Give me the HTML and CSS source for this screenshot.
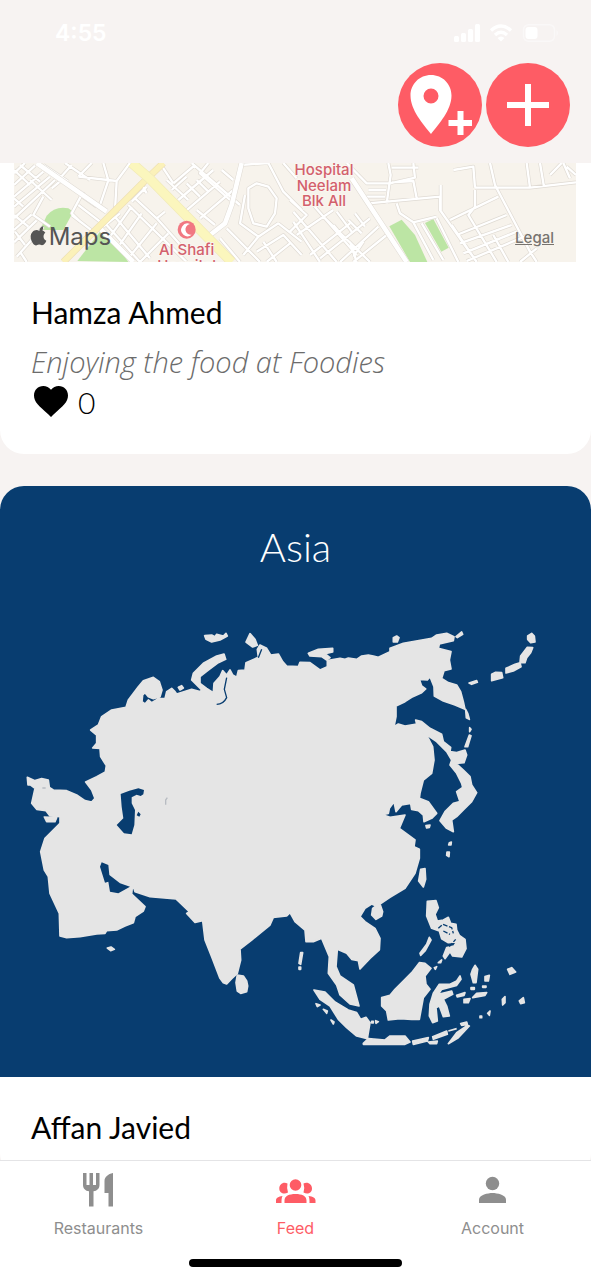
FILE: index.html
```html
<!DOCTYPE html>
<html lang="en">
<head>
<meta charset="utf-8">
<meta name="viewport" content="width=device-width, initial-scale=1">
<title>Feed</title>
<link rel="stylesheet" href="styles.css">
</head>
<body>
<div class="app">
  <header class="top">
    <div class="status">
      <span class="time">4:55</span>
      <svg class="status-icons" width="106" height="18" viewBox="0 0 106 18" fill="#fff" aria-hidden="true">
        <rect x="0" y="12" width="5" height="6" rx="1.5"/><rect x="7" y="9" width="5" height="9" rx="1.5"/><rect x="14" y="5" width="5" height="13" rx="1.5"/><rect x="21" y="0" width="5" height="18" rx="1.5"/>
        <g fill="none" stroke="#fff" stroke-width="3.4"><path d="M37 6.500Q47-2.500 57 6.500"/><path d="M41 11Q47 5.500 53 11"/></g><path d="M43.500 14Q47 11 50.500 14L47 17.500Z"/>
        <rect x="69.500" y=".7" width="31" height="16.600" rx="5" fill="none" stroke="#faf8f8" stroke-width="1.400"/><rect x="71.500" y="3" width="12" height="12" rx="3"/><path d="M102.500 6Q105.500 9 102.500 12Z" fill="#faf8f8"/>
      </svg>
    </div>
    <div class="actions">
      <button class="round" type="button" aria-label="Add place">
        <svg viewBox="0 0 84 84" fill="#fff"><path fill-rule="evenodd" d="M33 12C21.500 12 12.500 21 12.500 32.500C12.500 47 25 61 33 71C41 61 53.500 47 53.500 32.500C53.500 21 44.500 12 33 12ZM33 25.500A7.500 7.500 0 1 1 33 40.500A7.500 7.500 0 0 1 33 25.500Z"/><path d="M59.500 48h6v9H74v6h-8.500v9h-6v-9H50.500v-6h9Z"/></svg>
      </button>
      <button class="round" type="button" aria-label="Add post">
        <svg viewBox="0 0 84 84" fill="#fff"><path d="M39 21h6v18h18v6H45v18h-6V45H21v-6h18Z"/></svg>
      </button>
    </div>
  </header>

  <main class="feed">
    <article class="card">
      <div class="map">
        <svg class="map-art" viewBox="42 24 1686 297" preserveAspectRatio="xMidYMid slice" aria-label="Map">
          <rect x="42" y="24" width="1686" height="297" fill="#f7f3ec"/>
          <g fill="#bce5a4">
            <path d="M120 225L140 182Q165 152 205 160L220 170L190 225Z"/><path d="M232 318L300 230L345 262L385 321Z"/>
            <path d="M1168 214L1205 194L1245 240L1282 321H1230Z"/><path d="M1275 204L1300 192L1346 278L1324 290Z"/>
          </g>
          <defs>
            <path id="streets" d="M42 55L75 24M42 90L105 32M42 125L130 50M42 155L150 65M42 190L165 75M42 225L95 178M42 262L110 196M50 305L130 215M42 45L90 90M60 30L120 80M42 130L70 155M42 180L85 215M45 230L75 270M60 290L80 321M90 75L155 135M130 30L205 80M155 100L185 75M130 125L100 180L150 215M215 30L175 75M235 65L275 24M235 65L350 78M195 24L270 75M310 24L325 76L300 150M350 78L345 165M350 78L390 24M250 110L215 175L240 200M240 120L290 155M235 150L300 200M215 180L280 230M310 215L360 175M330 245L395 155M355 275L425 175M385 310L470 205M385 150L560 321M345 185L450 310M320 210L420 321M440 115L420 80M395 140L440 95M420 321L505 235M405 130L470 190L555 285M470 190L495 170M480 25L520 85M520 85L585 30M515 105L560 65M535 135L640 45M555 170L660 80M600 190L700 105M500 75L565 135M560 85L600 125M590 75L625 110M575 24L720 150M625 24L600 55L690 135M645 210L590 165M665 45L700 75M720 30L805 24M735 120L720 205L775 245L835 205M745 100L770 85L805 95L830 130L825 175L800 215L760 205L745 160ZM805 24L850 110L905 165M850 24L890 70M775 245L730 300M835 205L905 260M770 290L850 240L905 300M800 321L870 265M680 220L780 321M660 250L720 321M790 260L830 321M870 135L920 180L870 230M880 200L960 321M890 240L1000 165M930 300L1050 205M960 310L1110 190M1020 321L1135 215M1060 321L1160 240M880 170L1010 321M940 150L1070 300M975 190L1110 321M1010 170L1055 230M1000 210L1025 240M1065 175L1095 215M1045 195L1085 235M1050 260L1070 321M1060 305L1090 260"/>
            <path id="lanes" d="M1040 24L1100 85H1170L1245 68M1105 105H1158M1100 125H1155M1165 24L1172 60L1160 145M1175 38H1255M1175 82L1240 78L1250 130M1240 24L1245 70M1105 145L1320 125L1320 165L1430 321M1322 90V165M1190 145L1200 175L1240 202L1310 185M1240 202L1300 315M1265 205L1330 315M1310 190L1375 321M1350 195L1495 125M1355 210L1430 321M1370 240L1520 180M1380 265L1535 210M1390 295L1550 230M1400 318L1585 240M1425 105V155L1405 180L1490 321M1480 240L1525 321M1360 45L1420 35L1425 98M1425 98H1590L1728 82M1470 24L1485 90L1590 290L1610 321M1580 24L1590 98M1620 24L1632 96M1650 60L1685 24M1690 24L1710 70M1728 60L1700 35M1560 321L1610 280"/>
          </defs>
          <g fill="none" stroke-linejoin="round">
            <g stroke="#dfdad3" stroke-width="11"><use href="#streets"/><use href="#lanes"/></g>
            <g stroke="#fff" stroke-width="7"><use href="#streets"/><use href="#lanes"/></g>
            <g stroke="#dfdad3" stroke-width="17"><path d="M110 24L320 170M290 210L400 321M725 24L695 150L675 205L630 240M1055 70L1220 321"/></g>
            <g stroke="#fff" stroke-width="14"><path d="M110 24L320 170M290 210L400 321M725 24L695 150L675 205L630 240M1055 70L1220 321"/></g>
            <path d="M490 24L440 72L190 321" stroke="#eee0b5" stroke-width="21"/><path d="M490 24L440 72L190 321" stroke="#fbf1b9" stroke-width="17"/>
            <path d="M395 24L450 72L695 321" stroke="#f1eab8" stroke-width="30"/><path d="M395 24L450 72L695 321" stroke="#fbf6bd" stroke-width="26"/>
          </g>
          <circle cx="560" cy="224" r="27" fill="#f17882"/><path d="M570 207A19 19 0 1 0 575 239A15 15 0 1 1 570 207Z" fill="#fff"/>
          <path d="M126 226Q116 225 118 234Q129 233 130 213Q118 217 118 228C108 220 92 229 92 246C93 260 102 273 110 271C117 267 120 269 126 271C133 270 137 262 139 257C129 253 128 239 136 233Q133 228 126 226Z" fill="#555"/>
          <g class="place">
            <text x="972" y="60">Hospital</text><text x="972" y="107">Neelam</text><text x="972" y="154">Blk All</text>
            <text x="560" y="301">Al Shafi</text><text x="560" y="348">Hospital</text>
          </g>
          <text class="brand" x="146" y="270">Maps</text>
        </svg>
        <a class="legal" href="#legal">Legal</a>
      </div>
      <div class="body">
        <h2 class="name">Hamza Ahmed</h2>
        <p class="caption">Enjoying the food at Foodies</p>
        <button class="like" type="button" aria-label="Like, 0">
          <svg width="34" height="32" viewBox="0 0 34 32" aria-hidden="true"><path d="M17 31L14.500 28.500C5 20 0 16 0 9.500C0 4 4 0 9.300 0C12.300 0 15.200 1.500 17 3.800C18.800 1.500 21.700 0 24.700 0C30 0 34 4 34 9.500C34 16 29 20 19.500 28.500Z"/></svg>
          <span>0</span>
        </button>
      </div>
    </article>

    <article class="card">
      <div class="photo">
        <h3 class="region">Asia</h3>
        <svg class="asia" viewBox="0 390 1773 1383" aria-label="Map of Asia">
          <g fill="#e5e5e5" stroke="#e5e5e5" stroke-width="5" stroke-linejoin="round">
          <path d="M82 874L105 884 125 878 145 882 148 904 160 912 200 914 230 927 255 944 275 948 285 937 275 912 257 888 290 872 316 858 319 839 302 812 300 787 278 786 290 772 290 747 272 732 295 717 305 692 335 672 378 664 385 642 415 602 430 584 460 574 478 587 486 612 480 632 460 638 445 632 435 620 428 627 426 647 435 654 445 642 455 650 475 638 495 638 500 617 515 607 525 617 530 624 575 610 600 617 605 612 590 597 575 582 580 562 610 532 650 510 672 504 677 520 655 530 625 552 600 572 600 592 620 607 640 620 642 592 660 572 668 554 680 567 690 552 698 567 710 574 715 554 735 552 738 530 775 514 772 490 780 477 800 487 812 507 835 504 848 527 860 540 895 542 900 529 930 530 960 552 982 542 982 524 1020 517 1035 520 1045 516 1070 520 1085 510 1105 507 1120 510 1135 514 1170 497 1170 487 1210 472 1295 457 1310 447 1340 442 1362 452 1360 464 1318 474 1315 487 1353 497 1348 522 1353 549 1332 554 1325 577 1345 590 1370 597 1382 617 1390 647 1395 670 1365 657 1330 645 1303 630 1302 602 1290 572 1282 582 1258 580 1265 600 1277 609 1265 620 1235 634 1215 647 1188 660 1188 692 1182 722 1195 714 1215 720 1250 714 1247 702 1265 707 1290 727 1325 745 1330 767 1352 784 1350 797 1370 800 1395 792 1400 807 1392 830 1368 832 1390 852 1410 872 1415 897 1430 920 1415 947 1390 972 1370 992 1355 1002 1360 1037 1340 1027 1320 1004 1335 977 1360 952 1380 947 1370 917 1388 904 1385 892 1370 862 1350 837 1355 822 1340 797 1310 767 1270 740 1285 757 1298 782 1302 822 1295 862 1270 882 1260 922 1258 937 1285 947 1310 982 1295 997 1272 1007 1270 987 1255 974 1235 970 1232 952 1205 957 1188 977 1182 947 1168 967 1165 982 1148 986 1170 994 1215 987 1198 1027 1245 1062 1242 1082 1258 1090 1258 1117 1245 1162 1215 1207 1170 1234 1140 1254 1148 1277 1145 1290 1128 1300 1115 1287 1118 1267 1128 1260 1115 1254 1095 1267 1080 1292 1095 1307 1125 1327 1140 1357 1138 1392 1110 1417 1080 1449 1075 1424 1055 1420 1040 1402 1012 1390 1008 1442 1020 1470 1060 1497 1077 1560 1050 1554 1020 1527 1010 1497 985 1462 988 1412 965 1357 940 1367 918 1367 915 1332 885 1307 870 1280 860 1290 820 1294 810 1317 755 1362 720 1389 722 1422 712 1462 695 1478 680 1494 670 1490 660 1477 635 1412 615 1362 608 1304 585 1309 560 1282 568 1277 528 1239 450 1232 405 1217 398 1194 395 1224 435 1262 430 1275 405 1292 400 1310 375 1320 350 1332 320 1334 315 1342 290 1344 240 1352 200 1355 180 1350 178 1282 150 1222 145 1172 133 1152 122 1097 135 1057 180 1012 180 992 150 990 138 974 110 970 95 952 105 907 92 897 84 897Z"/>
          <path d="M614 449L635 447 645 452 650 445 670 450 678 442 682 450 660 462 635 468 618 460ZM750 443L765 460 772 478 758 483 738 468ZM535 604L545 599 550 606 540 612ZM925 502L955 490 998 487 998 498 975 503 990 515 980 522 965 512 930 510ZM1180 455L1190 450 1197 455 1192 468 1180 468ZM1368 452L1385 438 1388 445 1372 455ZM1583 450L1595 442 1603 450 1605 468 1592 470 1583 460ZM1582 484L1598 485 1592 500 1580 515 1575 530 1560 530 1562 510ZM1518 547L1545 535 1560 530 1563 542 1540 555 1518 561ZM1475 565L1487 559 1505 560 1508 575 1475 584ZM1407 591L1430 584 1432 589 1415 595ZM1397 670L1403 682 1408 700 1399 695ZM1409 725L1413 730 1409 737ZM1408 747L1413 749 1403 782 1395 782ZM133 993L170 995 165 1007 140 1007ZM322 1386L333 1383 343 1390 332 1394ZM712 1467L730 1470 740 1485 743 1500 740 1517 722 1522 712 1515 708 1490ZM1278 1019L1290 1017 1288 1024 1280 1026ZM1348 1070L1354 1068 1353 1077 1346 1077ZM1341 1098L1348 1098 1347 1112 1340 1108ZM1262 1150L1275 1148 1277 1180 1270 1203 1256 1185ZM902 1400L908 1400 902 1435 897 1432ZM897 1443H902V1450H897Z"/>
          <path d="M1282 1246L1308 1244 1315 1265 1305 1285 1312 1305 1330 1302 1345 1294 1352 1312 1368 1315 1370 1332 1378 1348 1395 1360 1398 1388 1385 1413 1358 1410 1350 1397 1335 1418 1330 1410 1340 1385 1362 1380 1370 1368 1345 1370 1325 1358 1318 1335 1295 1327 1280 1290ZM1288 1354L1293 1362 1275 1395 1262 1408 1260 1402 1280 1375ZM1258 1430L1275 1432 1293 1447 1275 1470 1278 1495 1290 1510 1270 1535 1258 1600 1235 1600 1200 1598 1165 1602 1160 1575 1145 1560 1145 1535 1170 1528 1185 1510 1215 1480 1235 1460ZM942 1512L975 1518 1005 1548 1045 1572 1070 1580 1082 1600 1098 1594 1110 1610 1102 1658 1070 1650 1040 1625 1015 1600 990 1560 960 1540ZM1115 1606H1120V1611H1115ZM1127 1604L1135 1607 1128 1612ZM1090 1672L1105 1658 1155 1662 1170 1650 1215 1650 1230 1668 1215 1675H1090ZM1238 1665L1285 1655 1282 1665 1240 1675ZM1285 1668L1312 1665 1310 1673H1290ZM1298 1652L1340 1635 1342 1645 1300 1660ZM1345 1673L1370 1640 1402 1618 1408 1620 1375 1655ZM1345 1635L1370 1628M1382 1613L1400 1608 1402 1615 1385 1618ZM1300 1522L1318 1495 1350 1495 1370 1485 1380 1470 1383 1480 1370 1498 1325 1510 1315 1525 1355 1515 1358 1525 1330 1540 1340 1560 1348 1590 1330 1592 1318 1560 1308 1565 1312 1605 1298 1610 1288 1590 1290 1555ZM1418 1450L1425 1438 1433 1450 1428 1490 1420 1490 1413 1465ZM1455 1472L1468 1468 1465 1485 1455 1485ZM1370 1528L1395 1520 1392 1528 1372 1533ZM1392 1540L1410 1538 1405 1550 1392 1550ZM1418 1535L1430 1522 1460 1520 1455 1528ZM1413 1505H1423V1510H1413ZM1448 1500H1458V1504H1448ZM1523 1450L1535 1445 1547 1458 1530 1465ZM1507 1540L1515 1532 1515 1550 1508 1557ZM1558 1545L1570 1535 1573 1550 1562 1553ZM1463 1582L1470 1575 1468 1588ZM1440 1590H1445V1595H1440ZM948 1553L960 1557 952 1562ZM970 1570L982 1575 980 1582ZM993 1602L1002 1608 1000 1614ZM1303 1445L1310 1442 1306 1450ZM1315 1430L1325 1422 1322 1430Z"/>
          </g>
          <g fill="#083d70">
            <path d="M305 1129L325 1137 328 1167 360 1192 390 1202 355 1222 330 1217 325 1187 315 1190 300 1142ZM362 924L388 914 415 907 432 912 430 925 422 930 410 926 395 934 395 952 405 972 403 1017 395 1045 372 1042 350 1017 370 997 365 962ZM415 977L422 985 418 992 410 988Z"/>
            <path d="M680 575L673 610L680 635Q670 655 650 655M775 515L785 490" fill="none" stroke="#083d70" stroke-width="4"/>
            <path d="M1315 1327L1328 1315L1355 1325L1360 1342M1330 1335L1350 1345M1348 1382L1367 1360" fill="none" stroke="#083d70" stroke-width="4" stroke-dasharray="14 5"/>
          </g>
          <path d="M502 935L497 942V956M127 906H137" fill="none" stroke="#b8bcc2" stroke-width="4"/>
        </svg>
      </div>
      <div class="body">
        <h2 class="name">Affan Javied</h2>
      </div>
    </article>
  </main>

  <nav class="tabs" aria-label="Main">
    <a class="tab" href="#restaurants">
      <svg width="40" height="34" viewBox="0 0 40 34" fill="currentColor" aria-hidden="true"><path d="M4 0h3.500v12h3V0h3.500v12h3V0h3.500v12c0 3.500-2.500 6-6 6.300V33.500h-4.500V18.300C6.500 18 4 15.500 4 12ZM34 0V33.500h-4.500V20h-4V8C25.500 4 29 1 34 0Z"/></svg>
      <span>Restaurants</span>
    </a>
    <a class="tab active" href="#feed" aria-current="page">
      <svg width="40" height="34" viewBox="0 0 40 34" fill="currentColor" aria-hidden="true"><circle cx="19.500" cy="12" r="5.800"/><path d="M8.500 30v-2.500C8.500 23 13 21 19.500 21s11 2 11 6.500V30ZM0 30v-2.500C0 25 2.500 23.300 6.500 23C5.500 25 5.500 27 5.500 30ZM39.500 30v-2.500C39.500 25 37 23.300 32.500 23C33.500 25 33.500 27 33.500 30ZM11.500 10.500C7 8.500 3.300 11.500 3.300 15.500C3.300 20 8 22 12 19.500Q10.500 15 11.500 10.500ZM27.500 10.500C32 8.500 36 11.500 36 15.500C36 20 31.500 22 27.500 19.500Q29 15 27.500 10.500Z"/></svg>
      <span>Feed</span>
    </a>
    <a class="tab" href="#account">
      <svg width="40" height="34" viewBox="0 0 40 34" fill="currentColor" aria-hidden="true"><circle cx="19.500" cy="10.500" r="6.700"/><path d="M6 30v-3.500C6 22 15 20 19.500 20s13.500 2 13.500 6.500V30Z"/></svg>
      <span>Account</span>
    </a>
  </nav>
  <div class="home"></div>
</div>
</body>
</html>
```

FILE: styles.css
```css
* { box-sizing: border-box; }

body {
  margin: 0;
  background: #f7f3f2;
  color: #000;
  font-family: Lato, "Liberation Sans", sans-serif;
}

h2, h3, p { margin: 0; font-weight: 400; }

button {
  padding: 0;
  border: 0;
  background: none;
  color: inherit;
  font: inherit;
}

a { color: inherit; text-decoration: none; }

.app {
  display: flex;
  flex-direction: column;
  height: 100vh;
}

.top { padding: 20px 21px 16px; }

.status {
  display: flex;
  align-items: center;
  justify-content: space-between;
  height: 26px;
  padding: 0 10px 0 34px;
  color: #fff;
  font: 600 23px/26px Inter, sans-serif;
}

.actions {
  display: flex;
  justify-content: flex-end;
  gap: 4px;
  padding-top: 17px;
}

.round {
  width: 84px;
  height: 84px;
  border-radius: 50%;
  background: #fe5c65;
}

.round svg { display: block; }

.feed {
  flex: 1;
  min-height: 0;
  overflow: hidden;
}

.card {
  margin-bottom: 32px;
  border-radius: 24px;
  background: #fff;
  overflow: hidden;
}

.card:first-child { border-radius: 0 0 24px 24px; }

.map {
  position: relative;
  margin: 0 15px 0 14px;
}

.map-art { display: block; width: 100%; }

.place {
  fill: #d3606c;
  stroke: #faf6f0;
  stroke-width: 6px;
  paint-order: stroke;
  font: 500 45px Inter, sans-serif;
  text-anchor: middle;
}

.brand { fill: #555; font: 400 72px Inter, sans-serif; }

.legal {
  position: absolute;
  right: 22px;
  bottom: 14px;
  color: #77736f;
  font: 500 15px/20px Inter, sans-serif;
  text-decoration: underline;
}

.body { padding: 32px 31px; }

.name { font-size: 30px; line-height: 36px; }

.caption {
  margin-top: 14px;
  color: #6c6c6c;
  font-family: "Open Sans", sans-serif;
  font-size: 29px;
  font-style: italic;
  font-weight: 300;
  line-height: 36px;
}

.like {
  display: flex;
  align-items: center;
  gap: 10px;
  height: 40px;
  margin-top: 2px;
  padding-left: 3px;
  font-size: 30px;
  font-weight: 300;
  line-height: 36px;
}

.photo { padding-top: 37px; background: #083d70; }

.region {
  margin-bottom: 45px;
  color: #fff;
  font-size: 40px;
  font-weight: 300;
  line-height: 48px;
  text-align: center;
}

.asia { display: block; width: 100%; }

.tabs {
  display: grid;
  grid-template-columns: repeat(3, 1fr);
  padding-top: 12px;
  border-top: 1px solid #e4e4e6;
  background: #fff;
}

.tab {
  display: flex;
  flex-direction: column;
  align-items: center;
  gap: 11px;
  color: #8e8e8e;
  font: 400 16px/20px Inter, sans-serif;
}

.active { color: #fe5c65; }

.home {
  padding: 21px 0 13px;
  background: #fff;
}

.home::before {
  content: "";
  display: block;
  width: 36%;
  height: 8px;
  margin: 0 auto;
  border-radius: 4px;
  background: #000;
}
```
